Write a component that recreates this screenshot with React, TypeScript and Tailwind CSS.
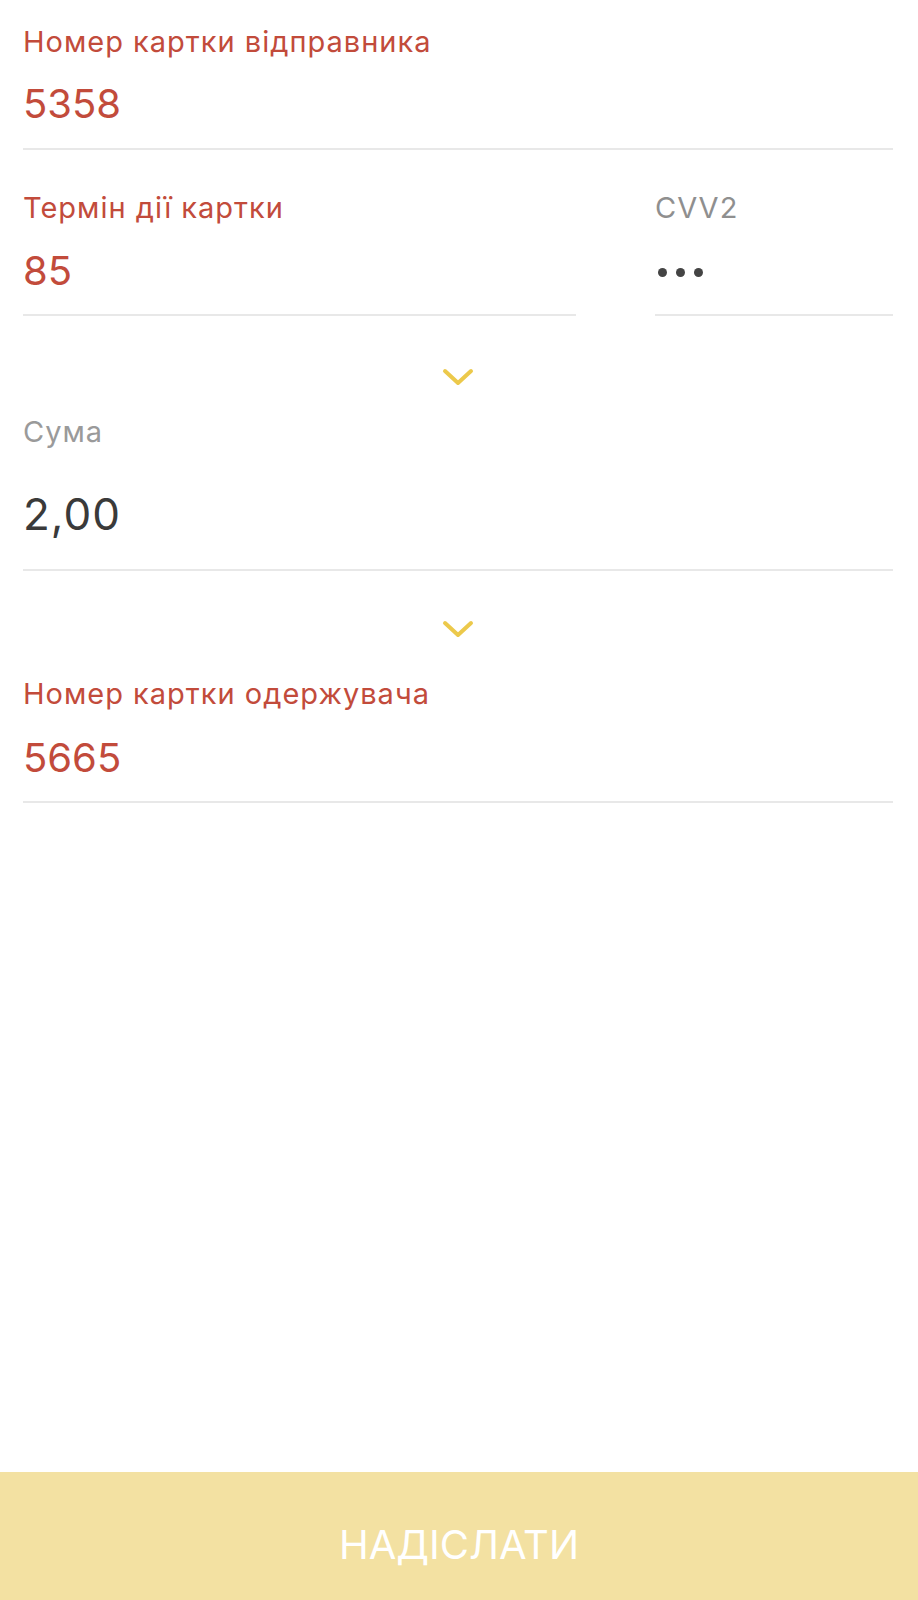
import React from 'react';

const font = { fontFamily: 'Inter, "Open Sans", sans-serif' };

function Chevron({ top }: { top: string }) {
  return (
    <div className={`flex justify-center ${top}`}>
      <svg width="32" height="18" viewBox="0 0 32 18" fill="none">
        <polyline points="3,3 16,15 29,3" stroke="#ecc94b" strokeWidth="4" strokeLinecap="round" strokeLinejoin="round" />
      </svg>
    </div>
  );
}

export default function App() {
  return (
    <div className="flex min-h-[1600px] w-full flex-col bg-white" style={font}>
      <div className="pl-[23px] pr-[25px]">
        {/* sender card */}
        <div className="border-b-2 border-[#e8e8e8] pt-[25px] pb-[20px]">
          <p className="text-[29px] leading-[34px] tracking-[1px] text-[#c24b3b]">Номер картки відправника</p>
          <p className="mt-[21px] text-[40px] leading-[48px] text-[#c24b3b]">5358</p>
        </div>

        <div className="grid grid-cols-[553px_1fr] gap-x-[79px]">
          <div className="border-b-2 border-[#e8e8e8] pt-[41px] pb-[19px]">
            <p className="text-[29px] leading-[34px] tracking-[1px] text-[#c24b3b]">Термін дії картки</p>
            <p className="mt-[22px] text-[40px] leading-[48px] text-[#c24b3b]">85</p>
          </div>
          <div className="border-b-2 border-[#e8e8e8] pt-[41px] pb-[19px]">
            <p className="text-[29px] leading-[34px] tracking-[1px] text-[#8f8f8f]">CVV2</p>
            <div className="mt-[24px] flex h-[46px] items-center gap-[9px] pl-[3px]">
              <span className="h-[9px] w-[9px] rounded-full bg-[#444]" />
              <span className="h-[9px] w-[9px] rounded-full bg-[#444]" />
              <span className="h-[9px] w-[9px] rounded-full bg-[#444]" />
            </div>
          </div>
        </div>

        <Chevron top="pt-[52px]" />

        <div className="mt-[29px] border-b-2 border-[#e8e8e8] pb-[29px]">
          <p className="text-[29px] leading-[34px] tracking-[1px] text-[#9a9a9a]">Сума</p>
          <p className="mt-[39px] text-[44px] leading-[52px] tracking-[1px] text-[#3a3a3a]">2,00</p>
        </div>

        <Chevron top="pt-[49px]" />

        <div className="mt-[39px] border-b-2 border-[#e8e8e8] pb-[19px]">
          <p className="text-[29px] leading-[34px] tracking-[1px] text-[#c24b3b]">Номер картки одержувача</p>
          <p className="mt-[23px] text-[40px] leading-[48px] text-[#c24b3b]">5665</p>
        </div>
      </div>

      <button className="mt-auto flex h-[128px] w-full items-start justify-center bg-[#f3e1a2] pt-[49px] text-[40px] leading-[48px] text-white">
        НАДІСЛАТИ
      </button>
    </div>
  );
}
